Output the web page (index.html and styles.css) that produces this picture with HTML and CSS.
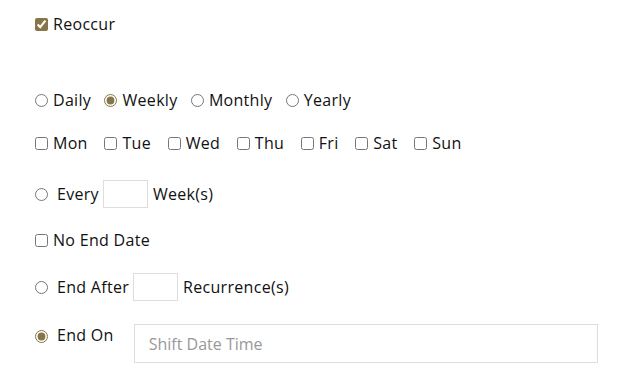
FILE: index.html
```html
<!DOCTYPE html>
<html lang="en">
<head>
    <meta charset="UTF-8">
    <title>Recurrence</title>
    <link rel="stylesheet" href="styles.css">
</head>
<body>
    <div class="recur">
        <label class="row top">
            <input type="checkbox" checked> Reoccur
        </label>

        <!-- frequency -->
        <div class="row freq">
            <label><input type="radio" name="freq"> Daily</label>
            <label><input type="radio" name="freq" checked> Weekly</label>
            <label><input type="radio" name="freq"> Monthly</label>
            <label><input type="radio" name="freq"> Yearly</label>
        </div>

        <div class="row days">
            <label><input type="checkbox"> Mon</label>
            <label><input type="checkbox"> Tue</label>
            <label><input type="checkbox"> Wed</label>
            <label><input type="checkbox"> Thu</label>
            <label><input type="checkbox"> Fri</label>
            <label><input type="checkbox"> Sat</label>
            <label><input type="checkbox"> Sun</label>
        </div>

        <div class="row every">
            <input type="radio" name="end">
            <span class="lbl">Every</span>
            <input type="text" class="num">
            <span>Week(s)</span>
        </div>

        <label class="row noend">
            <input type="checkbox"> No End Date
        </label>

        <div class="row after">
            <input type="radio" name="end2">
            <span class="lbl">End After</span>
            <input type="text" class="num">
            <span>Recurrence(s)</span>
        </div>

        <div class="row endon">
            <input type="radio" name="end2" checked>
            <span class="lbl">End On</span>
            <input type="text" class="date" placeholder="Shift Date Time">
        </div>
    </div>
</body>
</html>
```

FILE: styles.css
```css
* {
    box-sizing: border-box;
    margin: 0;
    padding: 0;
}

body {
    background: #fff;
    font-family: "Open Sans", sans-serif;
    font-size: 16px;
    letter-spacing: 0.3px;
    color: #111;
}

.recur {
    padding: 14px 0 0 34px;
}

input[type="checkbox"], input[type="radio"] {
    accent-color: #857548;
    width: 13px;
    height: 13px;
    margin: 0 5px 0 1px;
}

.row {
    display: flex;
    align-items: center;
}

.row label {
    display: flex;
    align-items: center;
}

.top {
    height: 20px;
    margin-bottom: 56px;
}

.freq {
    height: 20px;
    gap: 12.4px;
    margin-bottom: 23px;
}

.days {
    height: 20px;
    gap: 15.7px;
    margin-bottom: 27px;
}

.every, .after {
    height: 28px;
}

.every {
    margin-bottom: 22px;
}

.lbl {
    margin-left: 4px;
    margin-right: 4px;
}

.num {
    width: 45px;
    height: 28px;
    border: 1px solid #ddd;
    margin-right: 5px;
    font: inherit;
}

.noend {
    height: 20px;
    margin-bottom: 23px;
}

.after {
    margin-bottom: 23px;
}

.endon {
    align-items: flex-start;
}

.endon input[type="radio"] {
    margin-top: 6px;
}

.endon .lbl {
    margin-right: 20px;
}

.date {
    width: 464px;
    height: 39px;
    border: 1px solid #ddd;
    padding: 0 14px;
    font: inherit;
}

.date::placeholder {
    color: #999;
}
```
